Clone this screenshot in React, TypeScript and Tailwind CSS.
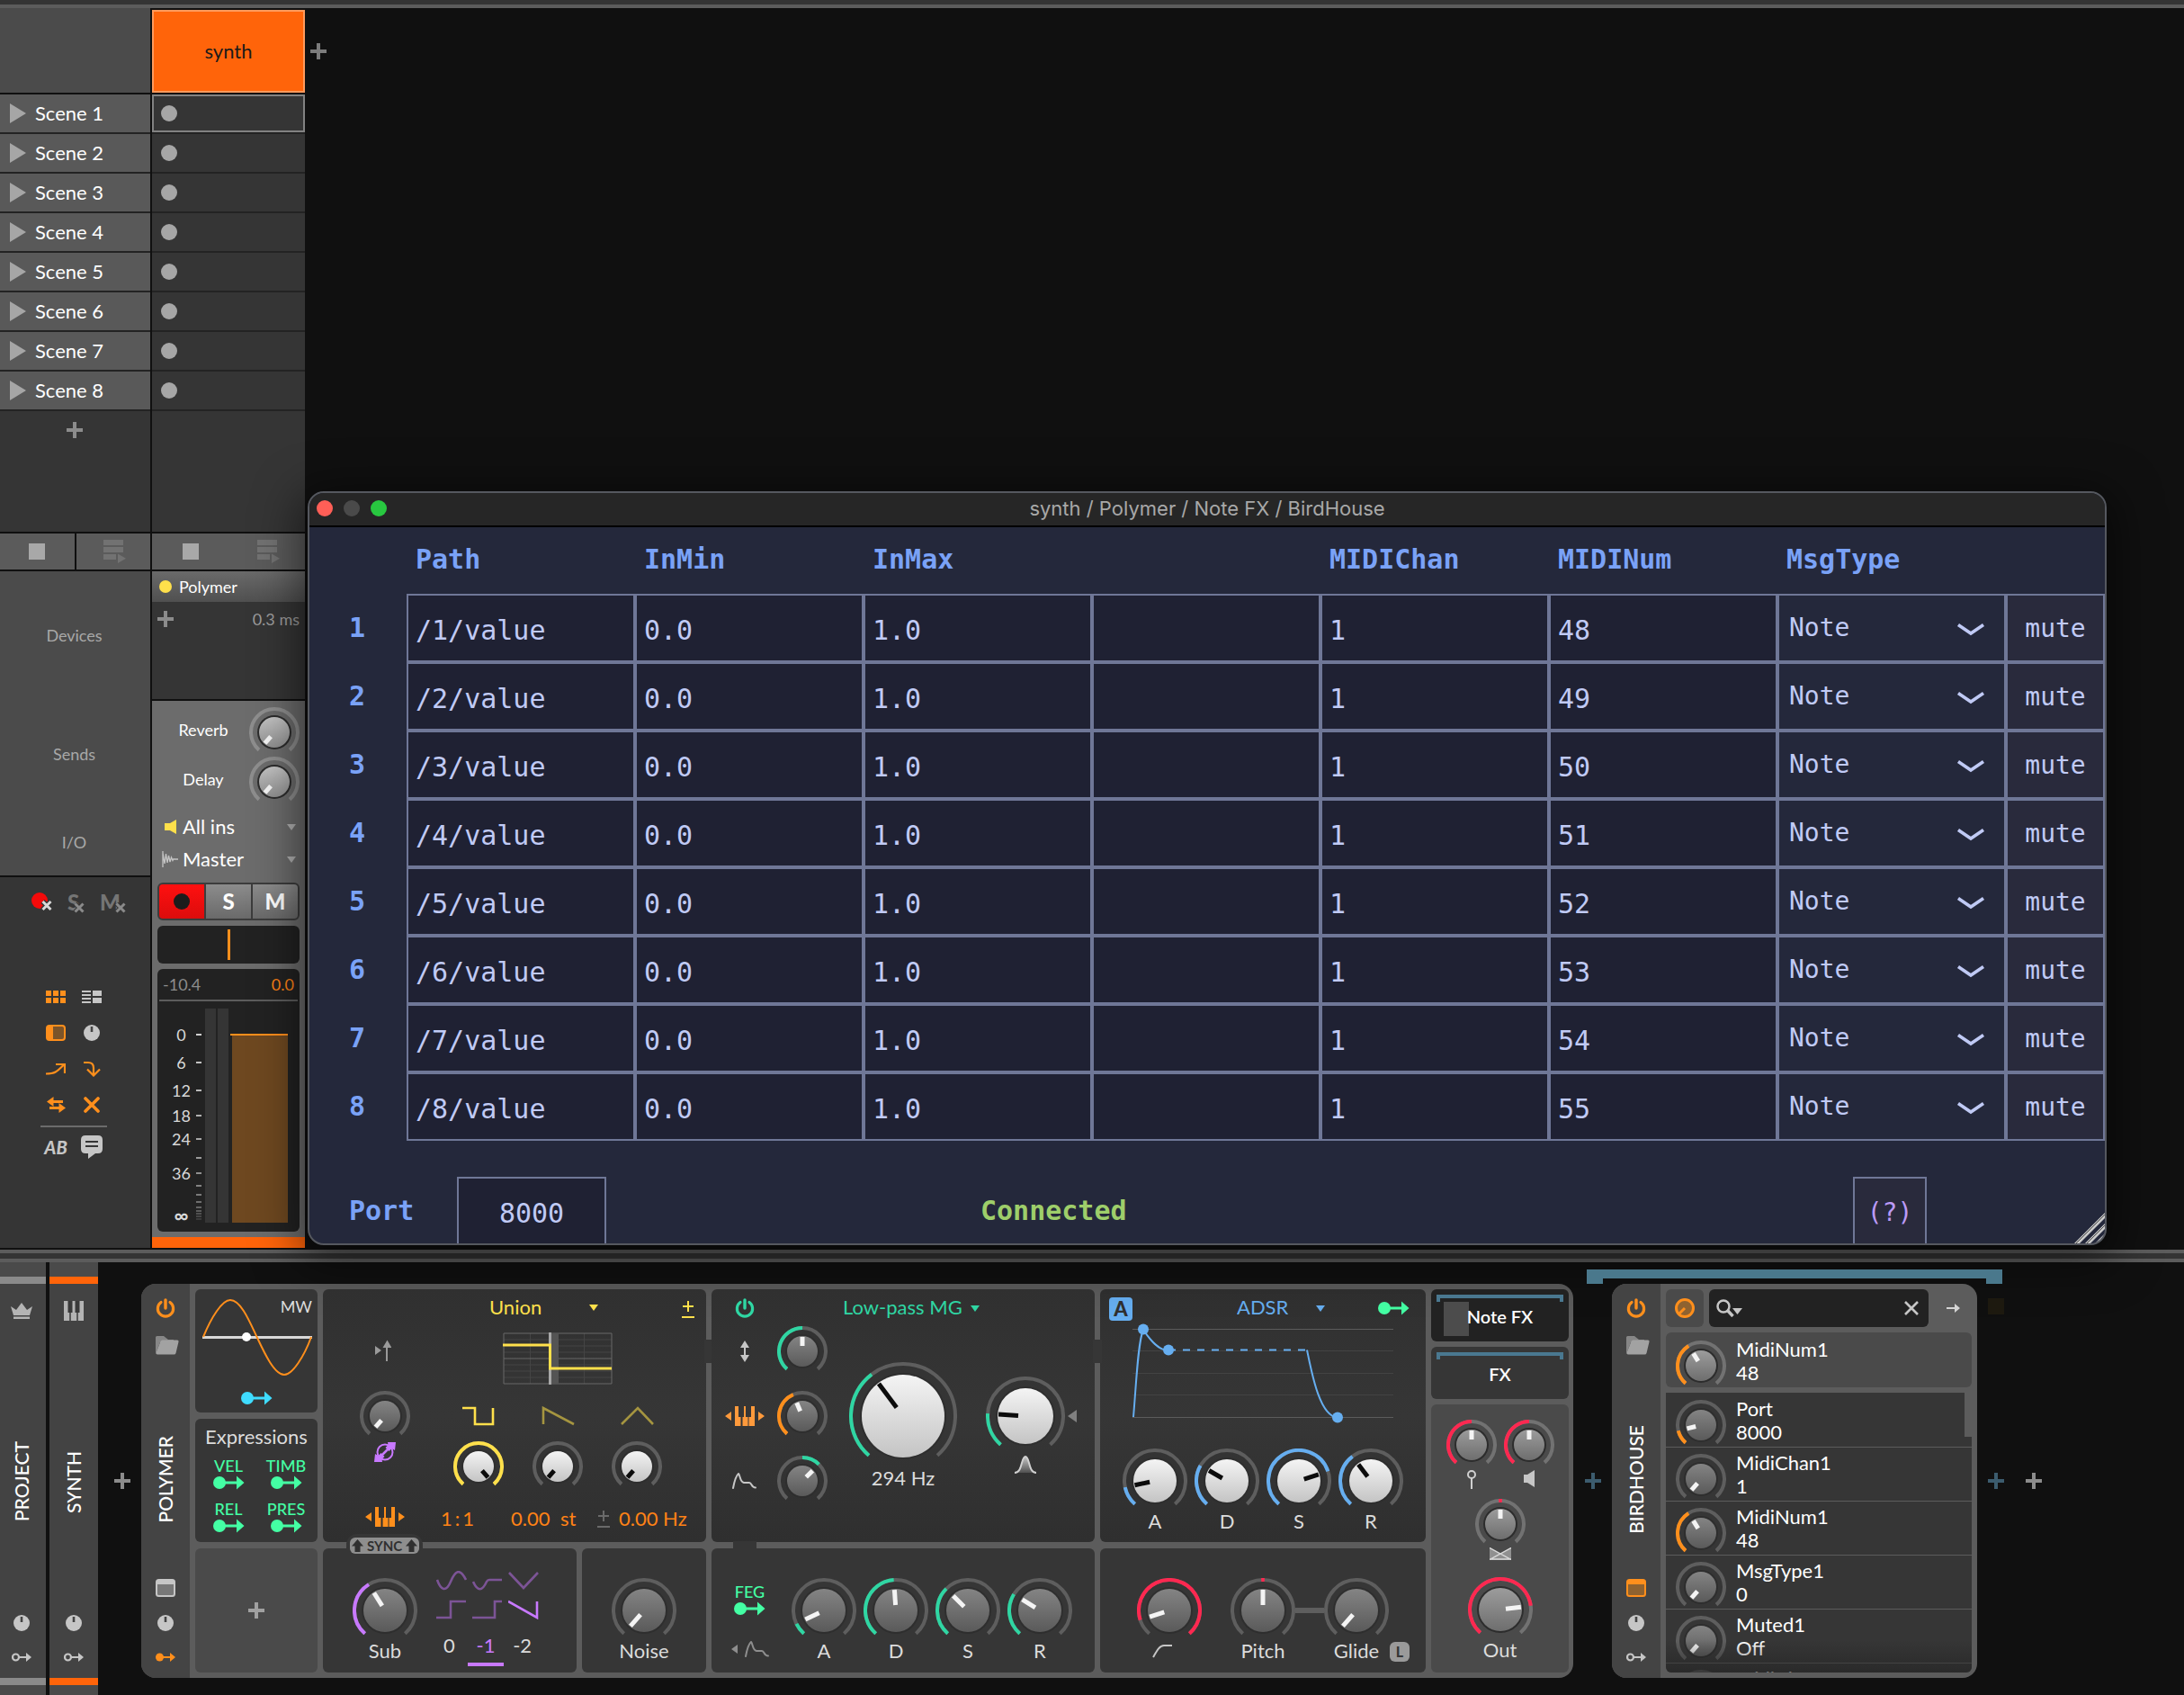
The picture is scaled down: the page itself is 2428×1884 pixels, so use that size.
import React from "react";

/* ---------- knobs ---------- */

const SWEEP = 139;

function polar(c: number, r: number, deg: number) {
  const a = (deg * Math.PI) / 180;
  return [c + r * Math.sin(a), c - r * Math.cos(a)];
}

function arc(c: number, r: number, from: number, to: number) {
  const [x1, y1] = polar(c, r, from);
  const [x2, y2] = polar(c, r, to);
  return `M${x1.toFixed(2)} ${y1.toFixed(2)}A${r} ${r} 0 ${to - from > 180 ? 1 : 0} 1 ${x2.toFixed(2)} ${y2.toFixed(2)}`;
}

type Face = "white" | "dark" | "mid" | "light";

const FACES: Record<Face, { top: string; bottom: string; rim: string; pointer: string }> = {
  white: { top: "#f4f4f4", bottom: "#c4c4c4", rim: "#2e2e2e", pointer: "#0c0c0c" },
  dark: { top: "#848484", bottom: "#5a5a5a", rim: "#2e2e2e", pointer: "#f4f4f4" },
  mid: { top: "#9c9c9c", bottom: "#6e6e6e", rim: "#2c2c2c", pointer: "#f4f4f4" },
  light: { top: "#c4c4c4", bottom: "#909090", rim: "#2c2c2c", pointer: "#f6f6f6" },
};

interface KnobProps {
  label: string;
  size: number;
  angle: number;
  from?: number;
  to?: number;
  color?: string;
  face?: Face;
  ring?: string;
}

function Knob({ label, size, angle, from = -SWEEP, to = angle, color, face = "dark", ring = "#5e5e5e" }: KnobProps) {
  const c = size / 2;
  const r = c - 2;
  const faceR = size <= 56 ? 17 : size <= 72 ? 24 : size <= 88 ? 31 : 46;
  const inner = size <= 72 ? 6 : size <= 88 ? 8 : 12;
  const f = FACES[face];
  const id = `knob-${face}-${size}`;
  return (
    <span className="relative block shrink-0" style={{ width: size, height: size }}>
      <svg width={size} height={size} viewBox={`0 0 ${size} ${size}`} fill="none" aria-hidden="true">
        <defs>
          <linearGradient id={id} x1="0" y1="0" x2="0" y2="1">
            <stop offset="0" stopColor={f.top} />
            <stop offset="1" stopColor={f.bottom} />
          </linearGradient>
        </defs>
        <path d={arc(c, r, -SWEEP, SWEEP)} stroke={ring} strokeWidth="4" />
        {color && to > from && <path d={arc(c, r, from, to)} stroke={color} strokeWidth="4" />}
        <circle cx={c} cy={c} r={faceR + 2} fill={f.rim} />
        <circle cx={c} cy={c} r={faceR} fill={`url(#${id})`} />
        <path d={`M${c} ${c - inner}V${c - faceR + 1}`} stroke={f.pointer} strokeWidth="5" transform={`rotate(${angle} ${c} ${c})`} />
      </svg>
      <input
        type="range"
        aria-label={label}
        min={-SWEEP}
        max={SWEEP}
        defaultValue={angle}
        className="absolute inset-0 h-full w-full cursor-pointer opacity-0"
      />
    </span>
  );
}

/* ---------- icons ---------- */

const Plus = ({ className = "text-[#8c8c8c]" }: { className?: string }) => (
  <svg width="18" height="18" viewBox="0 0 18 18" className={className} aria-hidden="true">
    <path d="M7 0h4v7h7v4h-7v7H7v-7H0V7h7z" fill="currentColor" />
  </svg>
);

const Caret = ({ className = "" }: { className?: string }) => (
  <svg width="10" height="7" viewBox="0 0 10 7" className={className} aria-hidden="true">
    <path d="M0 0h10L5 7z" fill="currentColor" />
  </svg>
);

const ModArrow = ({ className = "text-[#44ffa4]" }: { className?: string }) => (
  <svg width="35" height="16" viewBox="0 0 35 16" className={className} fill="currentColor" aria-hidden="true">
    <circle cx="7" cy="8" r="7" />
    <path d="M12 6.600h14V.5L34.500 8 26 15.500V9.400H12z" />
  </svg>
);

const SmallMod = ({ filled, className = "" }: { filled?: boolean; className?: string }) => (
  <svg width="22" height="10" viewBox="0 0 22 10" className={className} fill="none" aria-hidden="true">
    <circle cx="4.500" cy="5" r={filled ? 4.5 : 3.5} stroke={filled ? "none" : "currentColor"} strokeWidth="2.200" fill={filled ? "currentColor" : "none"} />
    <path d="M8 5h9" stroke="currentColor" strokeWidth="2" />
    <path d="M16 0l6 5-6 5z" fill="currentColor" />
  </svg>
);

const Dial = () => (
  <svg width="18" height="18" viewBox="0 0 18 18" aria-hidden="true">
    <circle cx="9" cy="9" r="9" fill="#c6c6c6" />
    <path d="M9 2v6" stroke="#444" strokeWidth="2.600" />
  </svg>
);

const Power = ({ className }: { className: string }) => (
  <svg width="22" height="22" viewBox="0 0 22 22" className={className} fill="none" stroke="currentColor" strokeLinecap="round" aria-hidden="true">
    <path d="M6 4.500a8.600 8.600 0 1 0 10 0" strokeWidth="3.200" />
    <path d="M11 2v9" strokeWidth="3.400" />
  </svg>
);

const Folder = () => (
  <svg width="26" height="21" viewBox="0 0 26 21" aria-hidden="true">
    <path d="M0 1.500Q0 0 1.500 0H9l5 4h6v3H5L0 20z" fill="#868686" />
    <path d="M5.500 6Q6 4.500 7.500 4.500H24q2 0 1.500 2l-3 12.500q-.5 1.500-2 1.500H2q-2 0-1.500-2z" fill="#a2a2a2" />
  </svg>
);

const WindowIcon = ({ on }: { on?: boolean }) => (
  <svg width="22" height="20" viewBox="0 0 22 20" aria-hidden="true">
    <rect width="22" height="20" rx="3.500" fill={on ? "#ff8f1c" : "#c6c6c6"} />
    <path d="M2 6h18v10.500q0 1.500-1.500 1.500h-15Q2 18 2 16.500z" fill={on ? "#8f6230" : "#787878"} />
  </svg>
);

const Keyboard = ({ className }: { className: string }) => (
  <svg width="44" height="22" viewBox="0 0 44 22" className={className} fill="currentColor" aria-hidden="true">
    <path d="M7 6v10L0 11zM37 6v10l7-5zM11 0h4v12h2.500v10H11zM21 0h2v12h2.500v10h-6V12H21zM29 0h4v22h-6.500V12H29z" />
  </svg>
);

const Envelope = ({ className }: { className: string }) => (
  <svg width="27" height="18" viewBox="0 0 27 18" className={className} fill="none" stroke="currentColor" strokeWidth="2" strokeLinejoin="round" strokeLinecap="round" aria-hidden="true">
    <path d="M1 17C2.500 9 4.500 3 7 1c2 2 1.500 9 6 10h6c3 0 2 5.500 7 5.500" />
  </svg>
);

const PlusMinus = ({ className }: { className: string }) => (
  <svg width="14" height="19" viewBox="0 0 14 19" className={className} fill="none" stroke="currentColor" strokeWidth="2" aria-hidden="true">
    <path d="M7 0v12M1 6h12M0 18h14" />
  </svg>
);

const ListPlay = () => (
  <svg width="25" height="26" viewBox="0 0 25 26" fill="#727272" aria-hidden="true">
    <path d="M0 0h22v6H0zM0 8h22v6H0zM0 16h14v6H0zM16 15.500l9 5.250-9 5.250z" />
  </svg>
);

/* ---------- scene and track columns ---------- */

const scenes = [1, 2, 3, 4, 5, 6, 7, 8];

function SceneColumn() {
  return (
    <aside className="flex w-[167px] shrink-0 flex-col gap-[2px]">
      <div className="h-[94px] bg-[#4b4b4b]" />
      <div className="bg-[#353535]">
        {scenes.map((n) => (
          <button key={n} type="button" className="flex h-11 w-full items-center border-b-2 border-[#232323] bg-[#595959] pl-[11px] text-[22px] leading-[26px] text-white">
            <svg width="18" height="22" viewBox="0 0 18 22" className="mr-[10px]" aria-hidden="true">
              <path d="M0 0l18 11L0 22z" fill="#a6a6a6" />
            </svg>
            Scene {n}
          </button>
        ))}
        <div className="flex h-[134px] justify-center pt-3 pr-[2px]">
          <button type="button" aria-label="Add scene" className="h-[18px]">
            <Plus />
          </button>
        </div>
      </div>
      <div className="grid h-10 grid-cols-2 gap-[2px]">
        <button type="button" aria-label="Stop all clips" className="flex items-center justify-center bg-[#5b5b5b]">
          <span className="size-[18px] bg-[#a8a8a8]" />
        </button>
        <button type="button" aria-label="Return to arrangement" className="flex items-center justify-center bg-[#5b5b5b] pl-[3px]">
          <ListPlay />
        </button>
      </div>
      <div className="bg-[#4b4b4b] pr-[2px] text-center text-[18px] leading-[22px] text-[#a8a8a8]">
        <div className="flex h-[142px] items-center justify-center">Devices</div>
        <div className="flex h-[121px] items-center justify-center">Sends</div>
        <div className="flex h-[75px] items-center justify-center">I/O</div>
      </div>
      <div className="flex flex-1 flex-col items-center bg-[#353535] pt-4 pr-[3px]">
        <div className="flex w-full items-start pl-[35px]">
          <button type="button" aria-label="Disarm all">
            <svg width="24" height="24" viewBox="0 0 24 24" aria-hidden="true">
              <circle cx="9" cy="10" r="9" fill="#f40a0a" />
              <path d="M12.500 11l9 9M21.500 11l-9 9" stroke="#353535" strokeWidth="6" />
              <path d="M12.500 11l9 9M21.500 11l-9 9" stroke="#d8d8d8" strokeWidth="3" />
            </svg>
          </button>
          {[
            { t: "S", label: "Unsolo all", cls: "ml-4 -mr-1" },
            { t: "M", label: "Unmute all", cls: "ml-4" },
          ].map(({ t, label, cls }) => (
            <button key={t} type="button" aria-label={label} className={`flex w-6 items-end text-[24px] leading-6 font-black text-[#757575] ${cls}`}>
              {t}
              <svg width="12" height="12" viewBox="0 0 12 12" className="-ml-[6px] shrink-0" aria-hidden="true">
                <path d="M1.500 1.500l9 9M10.500 1.500l-9 9" stroke="#353535" strokeWidth="5" />
                <path d="M1.500 1.500l9 9M10.500 1.500l-9 9" stroke="#8a8a8a" strokeWidth="3" />
              </svg>
            </button>
          ))}
        </div>
        <div className="mt-[73px] grid grid-cols-[40px_40px] grid-rows-[40px_40px_40px_40px] place-items-center text-[#ff8f1c]">
          <button type="button" aria-label="Clip launcher">
            <svg width="22" height="14" viewBox="0 0 22 14" fill="currentColor" aria-hidden="true">
              <path d="M0 0h6v6H0zM8 0h6v6H8zM16 0h6v6h-6zM0 8h6v6H0zM8 8h6v6H8zM16 8h6v6h-6z" />
            </svg>
          </button>
          <button type="button" aria-label="Devices">
            <svg width="22" height="14" viewBox="0 0 22 14" fill="#c6c6c6" aria-hidden="true">
              <path d="M0 0h10v2H0zM0 4h10v2H0zM0 8h10v2H0zM0 12h10v2H0zM12 0h10v6H12zM12 8h10v6H12z" />
            </svg>
          </button>
          <button type="button" aria-label="Crossfader">
            <svg width="22" height="18" viewBox="0 0 22 18" aria-hidden="true">
              <rect width="22" height="18" rx="4" fill="currentColor" />
              <path d="M8 2h10q2 0 2 2v10q0 2-2 2H8z" fill="#7c5429" />
            </svg>
          </button>
          <button type="button" aria-label="Sends">
            <Dial />
          </button>
          <button type="button" aria-label="Outputs">
            <svg width="22" height="14" viewBox="0 0 22 14" fill="none" stroke="currentColor" strokeWidth="2.200" aria-hidden="true">
              <path d="M0 12.500c10 0 12-2 20-10M11 2h10v10" />
            </svg>
          </button>
          <button type="button" aria-label="Inputs">
            <svg width="19" height="18" viewBox="0 0 19 18" fill="none" stroke="currentColor" strokeWidth="2.200" aria-hidden="true">
              <path d="M0 2h5q6 0 6 6v8M4 9.500l7 7 7-7" />
            </svg>
          </button>
          <button type="button" aria-label="Crossfade routing">
            <svg width="21" height="18" viewBox="0 0 21 18" fill="currentColor" aria-hidden="true">
              <path d="M0 5.500L7.500 0v4H18v3H7.500v4zM21 12.500L13.500 7v4H3v3h10.500v4z" />
            </svg>
          </button>
          <button type="button" aria-label="Close lanes">
            <svg width="18" height="18" viewBox="0 0 18 18" stroke="currentColor" strokeWidth="3.600" strokeLinecap="round" aria-hidden="true">
              <path d="M2 2l14 14M16 2L2 16" />
            </svg>
          </button>
        </div>
        <div className="mt-[3px] h-[2px] w-[74px] bg-[#6b6b6b]" />
        <div className="mt-[9px] grid grid-cols-[40px_40px] place-items-center text-[#c6c6c6]">
          <button type="button" className="text-[20px] leading-[26px] font-black italic">
            AB
          </button>
          <button type="button" aria-label="Comments">
            <svg width="24" height="26" viewBox="0 0 24 26" aria-hidden="true">
              <path d="M5 0h14q5 0 5 5v10q0 5-5 5h-3l-8 6v-6H5q-5 0-5-5V5q0-5 5-5z" fill="#c6c6c6" />
              <path d="M5 7h14M5 12h14" stroke="#353535" strokeWidth="2" />
            </svg>
          </button>
        </div>
      </div>
    </aside>
  );
}

const meterMarks = [
  { label: "0", cls: "" },
  { label: "6", cls: "mt-[11px]" },
  { label: "12", cls: "mt-[11px]" },
  { label: "18", cls: "mt-2" },
  { label: "24", cls: "mt-[6px]" },
  { label: "36", cls: "mt-[18px]" },
  { label: "∞", cls: "mt-[27px] text-[22px] font-bold" },
];

const ticks = [
  [28, "#d0d0d0"],
  [59, "#c4c4c4"],
  [90, "#bababa"],
  [118, "#b0b0b0"],
  [144, "#a6a6a6"],
  [165, "#9a9a9a"],
  [182, "#909090"],
  [196, "#848484"],
  [206, "#7a7a7a"],
  [214, "#6e6e6e"],
  [220, "#646464"],
  [224, "#5a5a5a"],
  [227, "#505050"],
  [230, "#464646"],
  [233, "#3a3a3a"],
] as const;

function Routing({ id, label, value, icon }: { id: string; label: string; value: string; icon: React.ReactNode }) {
  return (
    <div className="relative flex h-9 items-center text-[22px] leading-[26px] text-white">
      <span className="flex w-7 shrink-0 justify-center">{icon}</span>
      <select id={id} aria-label={label} className="min-w-0 flex-1 appearance-none bg-transparent outline-none">
        <option>{value}</option>
      </select>
      <Caret className="pointer-events-none absolute right-1 text-[#b0b0b0]" />
    </div>
  );
}

function TrackColumn() {
  return (
    <section className="ml-[2px] flex w-[170px] shrink-0 flex-col gap-[2px] pt-[2px]">
      <button type="button" className="h-[92px] border-2 border-[#ff9a5c] bg-[#ff640a] text-[22px] leading-[26px] text-[#1a1a1a]">
        synth
      </button>
      <div className="bg-[#353535]">
        {scenes.map((n) => (
          <div key={n} className="h-11 border-b-2 border-[#232323]">
            <button
              type="button"
              aria-label={`Record into scene ${n}`}
              className={`flex h-full w-full items-center ${n === 1 ? "border-2 border-[#828282] pl-2" : "pl-[10px]"}`}
            >
              <span className="size-[18px] rounded-full bg-[#a6a6a6]" />
            </button>
          </div>
        ))}
        <div className="h-[134px]" />
      </div>
      <div className="flex h-10 items-center justify-between bg-[#5b5b5b] pr-7 pl-[34px]">
        <button type="button" aria-label="Stop track">
          <span className="block size-[18px] bg-[#a8a8a8]" />
        </button>
        <button type="button" aria-label="Return track to arrangement">
          <ListPlay />
        </button>
      </div>
      <div className="bg-[#353535]">
        <div className="flex h-[34px] items-center bg-linear-to-b from-[#6a6a6a] to-[#505050] pl-2 text-[18px] leading-[22px] text-white">
          <span className="mr-2 size-[14px] rounded-full bg-[#ffe04b]" />
          Polymer
        </div>
        <div className="flex h-[108px] items-start justify-between pt-2 pr-[6px] pl-[6px]">
          <button type="button" aria-label="Add device" className="mt-[2px]">
            <Plus />
          </button>
          <span className="text-[18px] leading-[22px] text-[#9c9c9c]">0.3 ms</span>
        </div>
      </div>
      <div className="bg-[#6c6c6c]">
        <div className="px-[6px] pt-[7px] pb-[6px]">
          {["Reverb", "Delay"].map((name) => (
            <div key={name} className="flex h-[55px] items-center text-[18px] leading-[22px] text-white">
              <span className="flex-1 pb-[6px] text-center">{name}</span>
              <Knob label={name} size={56} angle={-SWEEP} face="light" ring="#8e8e8e" />
            </div>
          ))}
          <div className="mt-[5px]">
            <Routing
              id="track-in"
              label="Track input"
              value="All ins"
              icon={
                <svg width="13" height="16" viewBox="0 0 13 16" fill="#ffe04b" aria-hidden="true">
                  <path d="M0 4h6l7-4v16l-7-4H0z" />
                </svg>
              }
            />
            <Routing
              id="track-out"
              label="Track output"
              value="Master"
              icon={
                <svg width="18" height="18" viewBox="0 0 18 18" stroke="#c4c4c4" strokeWidth="1.300" fill="none" aria-hidden="true">
                  <path d="M1 0v18M1 2l2 12 1.500-11L6 13l1.500-8L9 12l1.500-5L12 10.500l1-2 1 .5h4" />
                </svg>
              }
            />
          </div>
          <div className="mt-2 grid h-[42px] grid-cols-3 gap-[2px] overflow-hidden rounded-md border-2 border-[#3c3c3c] bg-[#3c3c3c] text-[24px] leading-[26px] font-black text-white">
            <button type="button" aria-label="Record arm" className="flex items-center justify-center bg-linear-to-b from-[#ff1010] to-[#dc0c0c]">
              <span className="size-[18px] rounded-full bg-[#1c1c1c]" />
            </button>
            <button type="button" className="bg-linear-to-b from-[#8c8c8c] to-[#6a6a6a]">
              S
            </button>
            <button type="button" className="bg-linear-to-b from-[#8c8c8c] to-[#6a6a6a]">
              M
            </button>
          </div>
          <div className="relative mt-[6px] flex h-[42px] justify-center rounded-md bg-[#222] py-1">
            <span className="w-[3px] bg-[#ff8f1c]" />
            <input type="range" aria-label="Pan" className="absolute inset-0 h-full w-full opacity-0" />
          </div>
          <div className="mt-[6px] h-[292px] rounded-md bg-[#222] px-[2px]">
            <div className="flex h-9 items-center justify-between border-b-2 border-[#5c5c5c] px-1 text-[18px] leading-[22px]">
              <span className="text-[#8c8c8c]">-10.4</span>
              <span className="text-[#ff8216]">0.0</span>
            </div>
            <div className="relative flex pt-2">
              <div className="flex w-[41px] flex-col items-center pt-[19px] pl-2 text-[18px] leading-5 text-[#d8d8d8]">
                {meterMarks.map((m) => (
                  <span key={m.label} className={m.cls}>
                    {m.label}
                  </span>
                ))}
              </div>
              <svg width="102" height="238" viewBox="0 0 102 238" aria-hidden="true">
                {ticks.map(([y, c]) => (
                  <rect key={y} x="0" y={y} width="6" height="2" fill={c} />
                ))}
                <path d="M10 0h12v238H10zM24 0h12v238H24z" fill="#353535" />
                <path d="M40 29h62v209H40z" fill="#6e4820" />
                <path d="M38 28h64v2H38z" fill="#ff8f1c" />
              </svg>
              <input type="range" aria-label="Volume" className="absolute inset-0 h-full w-full opacity-0" />
            </div>
          </div>
        </div>
        <div className="h-3 bg-[#ff640a]" />
      </div>
    </section>
  );
}

/* ---------- floating plug-in window ---------- */

const columns = ["Path", "InMin", "InMax", "", "MIDIChan", "MIDINum", "MsgType"];
const fields = ["Path", "InMin", "InMax", "Extra", "MIDIChan", "MIDINum"];

function PluginWindow() {
  return (
    <section className="absolute top-[537px] right-[86px] left-[342px] overflow-hidden rounded-[18px] border-2 border-[#55585f] bg-[#24283b] font-['DejaVu_Sans_Mono',monospace] shadow-[0_10px_50px_10px_rgba(0,0,0,0.5)]">
      <header className="relative flex h-[38px] items-center justify-center border-b-2 border-black bg-[#262626] pb-[2px] font-[Inter,sans-serif] text-[22px] leading-[26px] text-[#a8a8a8]">
        <div className="absolute left-2 flex gap-3">
          <button type="button" aria-label="Close" className="size-[18px] rounded-full bg-[#ff5f57]" />
          <button type="button" aria-label="Minimize" className="size-[18px] rounded-full bg-[#4a4a4a]" />
          <button type="button" aria-label="Zoom" className="size-[18px] rounded-full bg-[#28c840]" />
        </div>
        <h1>synth / Polymer / Note FX / BirdHouse</h1>
      </header>
      <table className="w-full table-fixed border-collapse text-[30px] leading-9 text-[#c0caf5]">
        <colgroup>
          <col className="w-[108px]" />
          {columns.map((c, i) => (
            <col key={i} />
          ))}
          <col className="w-[110px]" />
        </colgroup>
        <thead>
          <tr className="h-[74px] text-left align-top text-[#7aa2f7]">
            <td />
            {columns.map((c, i) => (
              <th key={i} scope="col" className="pt-[18px] pl-[10px] font-bold">
                {c}
              </th>
            ))}
            <td />
          </tr>
        </thead>
        <tbody>
          {scenes.map((n) => {
            const values = [`/${n}/value`, "0.0", "1.0", "", "1", String(47 + n)];
            return (
              <tr key={n} className="h-[76px]">
                <th scope="row" className="p-0 pr-[2px] font-bold text-[#7aa2f7]">
                  {n}
                </th>
                {values.map((v, i) => (
                  <td key={i} className="p-0">
                    <input
                      type="text"
                      aria-label={`${fields[i]} ${n}`}
                      defaultValue={v}
                      className="block h-[76px] w-full border-2 border-[#6f7797] bg-[#1f2133] pt-[5px] pl-2 outline-none"
                    />
                  </td>
                ))}
                <td className="p-0">
                  <div className="relative">
                    <select aria-label={`MsgType ${n}`} className="block h-[76px] w-full appearance-none border-2 border-[#6f7797] bg-[#24283b] pl-[11px] text-[28px] outline-none">
                      <option>Note</option>
                    </select>
                    <svg width="32" height="16" viewBox="0 0 32 16" className="pointer-events-none absolute top-8 right-[23px]" fill="none" aria-hidden="true">
                      <path d="M2 2.500l14 9.500L30 2.500" stroke="#c0caf5" strokeWidth="3.600" />
                    </svg>
                  </div>
                </td>
                <td className="p-0">
                  <button type="button" className="block h-[76px] w-full border-2 border-[#6f7797] bg-[#292a3c] pt-[2px] text-[28px]">
                    mute
                  </button>
                </td>
              </tr>
            );
          })}
        </tbody>
      </table>
      <footer className="relative flex h-[114px] items-start pt-10 text-[30px] leading-9">
        <label htmlFor="port" className="w-[164px] pt-5 pl-[44px] font-bold text-[#7aa2f7]">
          Port
        </label>
        <input id="port" type="text" defaultValue="8000" className="h-[76px] w-[166px] border-2 border-[#6f7797] bg-[#1f2133] pt-[5px] text-center text-[#c0caf5] outline-none" />
        <strong className="ml-[416px] pt-5 text-[#9ece6a]">Connected</strong>
        <button type="button" className="mr-[198px] ml-auto h-[76px] w-[82px] border-2 border-[#6f7797] bg-[#292a3c] pt-[3px] text-[28px] text-[#bb9af7]">
          (?)
        </button>
        <svg width="36" height="36" viewBox="0 0 36 36" className="absolute right-0 bottom-0" aria-hidden="true">
          <path d="M2 36L36 2v6L8 36zM14 36l22-22v6L20 36zM25 36l11-11v6l-5 5z" fill="#c9c9c9" />
          <path d="M4 36L36 4M16 36l20-20M27 36l9-9" stroke="#4a4a4a" strokeWidth="1" />
        </svg>
      </footer>
    </section>
  );
}

/* ---------- device rack ---------- */

function RackStrip({ name, width, inset, active, icon }: { name: string; width: string; inset?: string; active?: boolean; icon: React.ReactNode }) {
  const bar = active ? "bg-[#ff640a]" : "bg-[#8a8a8a]";
  return (
    <div className={`flex flex-col bg-[#4a4a4a] pt-4 ${width}`}>
      <div className={`h-2 ${bar}`} />
      <div className={`flex h-[438px] flex-col items-center bg-[#434343] pt-4 ${inset ?? ""}`}>
        <div className="flex h-7 items-center">{icon}</div>
        <VerticalName>{name}</VerticalName>
        <Dial />
        <SmallMod className="mt-6 mb-[18px] text-[#c6c6c6]" />
      </div>
      <div className={`h-2 ${bar}`} />
    </div>
  );
}

function VerticalName({ children }: { children: string }) {
  return (
    <div className="flex flex-1 items-center justify-center pt-7">
      <span className="rotate-180 text-[21px] leading-[26px] font-medium text-white [writing-mode:vertical-rl]">{children}</span>
    </div>
  );
}

function DeviceSpine({ name, windowOn, modOn }: { name: string; windowOn?: boolean; modOn?: boolean }) {
  return (
    <div className="flex w-[54px] shrink-0 flex-col items-center bg-[#444] pt-4">
      <button type="button" aria-label={`${name} on`}>
        <Power className="text-[#ff8f1c]" />
      </button>
      <button type="button" aria-label={`Browse ${name}`} className="mt-5 ml-1">
        <Folder />
      </button>
      <VerticalName>{name}</VerticalName>
      <div className="flex flex-col items-center">
        <button type="button" aria-label={`${name} window`}>
          <WindowIcon on={windowOn} />
        </button>
        <button type="button" aria-label={`${name} remote controls`} className="mt-5">
          <Dial />
        </button>
        <button type="button" aria-label={`${name} modulators`} className="mt-6 mb-[18px]">
          <SmallMod filled={modOn} className={modOn ? "text-[#ff8f1c]" : "text-[#c6c6c6]"} />
        </button>
      </div>
    </div>
  );
}

const panel = "rounded-md bg-[#363636]";
const tall = "rounded-md bg-linear-to-b from-[#303030] via-[#363636] to-[#2f2f2f]";

function KnobField({ text, children }: { text: React.ReactNode; children: React.ReactNode }) {
  return (
    <div className="flex flex-col items-center">
      {children}
      <span className="-mt-1 flex h-[26px] items-center text-[22px] leading-[26px] text-[#dcdcdc]">{text}</span>
    </div>
  );
}

function ModLabel({ text }: { text: string }) {
  return (
    <button type="button" className="flex flex-col items-center text-[18px] leading-[22px] font-medium text-[#44ffa4]">
      {text}
      <ModArrow />
    </button>
  );
}

function ModulatorColumn() {
  return (
    <>
      <div className={`relative ${panel}`}>
        <svg width="122" height="86" viewBox="0 0 122 86" fill="none" className="mt-[11px] ml-2" aria-hidden="true">
          <path d="M0 42.500h122" stroke="#d8d8d8" strokeWidth="3" />
          <path d="M1 42C10 20 22 1 31 1c12 0 22 25 30 42s19 41 30 41c9 0 22-20 30-42" stroke="#ff8f1c" strokeWidth="2" />
          <circle cx="49" cy="42" r="5" fill="#fff" />
        </svg>
        <span className="absolute top-2 right-[6px] text-[18px] leading-[22px] text-[#dcdcdc]">MW</span>
        <div className="mt-4 flex justify-center">
          <ModArrow className="text-[#3fdcff]" />
        </div>
      </div>
      <div className={`${panel} pt-[7px]`}>
        <div className="text-center text-[22px] leading-[26px] text-[#dcdcdc]">Expressions</div>
        <div className="mt-2 grid grid-cols-2 gap-y-[10px] pr-[3px] pl-[5px]">
          {["VEL", "TIMB", "REL", "PRES"].map((t) => (
            <ModLabel key={t} text={t} />
          ))}
        </div>
      </div>
      <button type="button" aria-label="Add modulator" className="flex items-center justify-center rounded-md bg-[#4a4a4a]">
        <Plus className="text-[#a0a0a0]" />
      </button>
    </>
  );
}

function PanelSelect({ label, value, className }: { label: string; value: string; className: string }) {
  return (
    <select aria-label={label} className={`appearance-none bg-transparent text-[22px] leading-[26px] outline-none ${className}`}>
      <option>{value}</option>
    </select>
  );
}

function OscillatorPanel() {
  const shapes = [
    { name: "Pulse level", d: "M0 2h14v18h20V2", on: true },
    { name: "Saw level", d: "M2 20V2l34 18", on: false },
    { name: "Triangle level", d: "M1 20L19 2l17 18", on: false },
  ];
  return (
    <div className={`relative flex ${tall}`}>
      <div className="flex w-[129px] flex-col items-center pt-14 pl-2">
        <svg width="18" height="24" viewBox="0 0 18 24" fill="#9a9a9a" className="-ml-1" aria-hidden="true">
          <path d="M0 7l7 5-7 5zM12 24V9H8.500l5-8.500 5 8.500H14v15z" />
        </svg>
        <div className="mt-[33px]">
          <Knob label="Pulse width" size={56} angle={-SWEEP} />
        </div>
        <svg width="26" height="24" viewBox="0 0 26 24" className="text-[#c879ff]" fill="none" stroke="currentColor" aria-hidden="true">
          <circle cx="13" cy="12" r="8.500" strokeWidth="2" />
          <path d="M6 19L20 5" strokeWidth="2.500" />
          <path d="M16 1l9 0-1 9-3.500-2-3 3-4-4 3-3zM10 23l-9 0 1-9 3.500 2 3-3 4 4-3 3z" fill="currentColor" stroke="none" />
        </svg>
        <Keyboard className="mt-[49px] text-[#ff8f1c]" />
      </div>
      <div className="flex-1">
        <div className="flex h-10 items-center pr-[13px] pl-14 text-[#ffe04b]">
          <PanelSelect label="Oscillator" value="Union" className="w-[111px]" />
          <Caret />
          <button type="button" aria-label="Invert" className="mt-1 ml-auto">
            <PlusMinus className="" />
          </button>
        </div>
        <div className="w-[264px]">
          <svg width="122" height="58" viewBox="0 0 122 58" className="mx-auto mt-2" fill="none" aria-hidden="true">
            <path d="M1 8h120M1 15h120M1 22h120M1 36h120M1 43h120M1 50h120M30.500 1v56M90.500 1v56" stroke="#444" />
            <path d="M1 1h120v56H1zM1 29h120" stroke="#686868" />
            <path d="M54 1h8v56h-8z" fill="#545454" />
            <path d="M52.500 0v58" stroke="#a8a8a8" strokeWidth="3" />
            <path d="M0 14h52.500v26H121" stroke="#ffe04b" strokeWidth="3" />
          </svg>
          <div className="mt-6 grid grid-cols-3">
            {shapes.map((s) => (
              <div key={s.name} className="flex flex-col items-center">
                <svg width="37" height="22" viewBox="0 0 37 22" fill="none" stroke={s.on ? "#ffe04b" : "#a59540"} strokeWidth="2.600" aria-hidden="true">
                  <path d={s.d} />
                </svg>
                <div className="mt-[17px]">
                  <Knob label={s.name} size={56} angle={s.on ? SWEEP : -SWEEP} color="#ffe04b" face="white" />
                </div>
              </div>
            ))}
          </div>
        </div>
        <div className="mt-[17px] flex items-center pl-[2px] text-[22px] leading-[26px] text-[#ff8216]">
          <span className="flex w-[78px] gap-[3px]">
            <span>1</span>
            <span>:</span>
            <span>1</span>
          </span>
          <span className="w-[55px]">0.00</span>
          <span className="w-[41px]">st</span>
          <PlusMinus className="mr-[10px] text-[#6a6a6a]" />
          <span>0.00 Hz</span>
        </div>
      </div>
      <div className="absolute -bottom-[13px] left-[26px] z-10 rounded-t-xl bg-[#363636] px-1 pt-1">
        <button type="button" className="flex h-[18px] items-center gap-1 rounded-md bg-[#8e8e8e] px-[2px] text-[15px] leading-[18px] font-bold text-[#303030]">
          <svg width="13" height="14" viewBox="0 0 13 14" fill="currentColor" aria-hidden="true">
            <path d="M6.500 0L13 7.500H9.500V14h-6V7.500H0z" />
          </svg>
          SYNC
          <svg width="13" height="14" viewBox="0 0 13 14" fill="currentColor" aria-hidden="true">
            <path d="M6.500 0L13 7.500H9.500V14h-6V7.500H0z" />
          </svg>
        </button>
      </div>
      <span className="absolute top-14 -right-[8px] h-[26px] w-[10px] bg-[#363636]" />
    </div>
  );
}

function FilterPanel() {
  return (
    <div className={`relative ${tall}`}>
      <div className="flex h-[33px] items-start pt-[7px] text-[#2fd6a3]">
        <button type="button" aria-label="Filter on" className="mt-[3px] ml-[26px]">
          <Power className="" />
        </button>
        <PanelSelect label="Filter" value="Low-pass MG" className="ml-[98px] w-[142px]" />
        <Caret className="mt-[11px]" />
      </div>
      <div className="flex">
        <div className="grid grid-cols-[73px_56px] grid-rows-[72px_72px_72px] place-items-center">
          <svg width="10" height="24" viewBox="0 0 10 24" fill="#c6c6c6" aria-hidden="true">
            <path d="M5 0l5 8H6v8h4l-5 8-5-8h4V8H0z" />
          </svg>
          <Knob label="Filter drive" size={56} angle={0} color="#2fd6a3" />
          <Keyboard className="text-[#ff9a3c]" />
          <Knob label="Key tracking" size={56} angle={-23} color="#ff8f1c" />
          <Envelope className="text-[#c6c6c6]" />
          <Knob label="Envelope amount" size={56} angle={45} from={0} color="#2fd6a3" />
        </div>
        <div className="mt-12 ml-6">
          <KnobField text="294 Hz">
            <Knob label="Cutoff" size={120} angle={-37} color="#2fd6a3" face="white" />
          </KnobField>
        </div>
        <div className="mt-16 ml-8 flex flex-col items-center">
          <Knob label="Resonance" size={88} angle={-86} color="#2fd6a3" face="white" />
          <svg width="24" height="20" viewBox="0 0 24 20" aria-hidden="true">
            <defs>
              <linearGradient id="bell" x1="0" y1="0" x2="0" y2="1">
                <stop offset="0" stopColor="#c8c8c8" />
                <stop offset="1" stopColor="#505050" />
              </linearGradient>
            </defs>
            <path d="M0 19c9 0 7-18 12-18s3 18 12 18z" fill="url(#bell)" />
            <path d="M0 19c9 0 7-18 12-18s3 18 12 18" fill="none" stroke="#d0d0d0" strokeWidth="2" />
          </svg>
        </div>
        <svg width="10" height="14" viewBox="0 0 10 14" className="mt-[101px] ml-[3px]" aria-hidden="true">
          <path d="M10 0v14L0 7z" fill="#808080" />
        </svg>
      </div>
      <span className="absolute top-14 -right-[8px] z-10 h-[26px] w-[10px] bg-[#363636]" />
      <span className="absolute -bottom-2 left-6 h-[9px] w-[26px] bg-[#363636]" />
    </div>
  );
}

function AdsrPanel() {
  const knobs = [
    ["A", -102],
    ["D", -60],
    ["S", 72],
    ["R", -37],
  ] as const;
  return (
    <div className={tall}>
      <div className="flex h-[38px] items-start pt-[7px] pl-[10px] text-[#66aef0]">
        <button type="button" aria-label="Amp envelope" className="mt-[2px] h-[26px] w-[26px] rounded bg-[#66aef0] text-[22px] leading-[26px] font-black text-[#303030]">
          A
        </button>
        <PanelSelect label="Envelope" value="ADSR" className="ml-[116px] w-[88px]" />
        <Caret className="mt-[11px]" />
        <button type="button" aria-label="Envelope modulation" className="mt-[6px] ml-auto mr-[18px]">
          <ModArrow />
        </button>
      </div>
      <svg width="304" height="114" viewBox="0 0 304 114" className="ml-[30px]" fill="none" aria-hidden="true">
        <path d="M6 30.500h290M6 55.500h290M6 79.500h290" stroke="#434343" />
        <path d="M6 6.500h290M6 104.500h290" stroke="#5c5c5c" />
        <path d="M7 104C10 70 12 20 18 7c8 12 17 23 28 23" stroke="#66aef0" strokeWidth="2" />
        <path d="M46 29.500h154" stroke="#66aef0" strokeWidth="2" strokeDasharray="8 8" />
        <path d="M200 29.500c6 30 15 74 34 75" stroke="#66aef0" strokeWidth="2" />
        <circle cx="18" cy="6.500" r="6" fill="#66aef0" />
        <circle cx="46" cy="29.500" r="6" fill="#66aef0" />
        <circle cx="234" cy="104.500" r="6" fill="#66aef0" />
      </svg>
      <div className="mt-[25px] ml-[21px] grid w-[320px] grid-cols-4">
        {knobs.map(([t, a]) => (
          <KnobField key={t} text={t}>
            <Knob label={`Amp ${t}`} size={72} angle={a} color="#66aef0" face="white" />
          </KnobField>
        ))}
      </div>
    </div>
  );
}

function Bracket() {
  return <span className="mx-[6px] block h-2 shrink-0 border-x-4 border-t-4 border-[#4a7890]" />;
}

function OutputColumn() {
  return (
    <div className="row-span-3 flex flex-col gap-[6px]">
      <button type="button" className="relative flex h-[58px] flex-col items-stretch justify-start rounded-md bg-[#222] pt-[6px] text-[20px] leading-8 font-semibold text-white">
        <Bracket />
        <span className="absolute top-[14px] left-[14px] h-[38px] w-7 bg-[#4c4c4c]" />
        <span className="relative">Note FX</span>
      </button>
      <button type="button" className="flex h-[58px] flex-col items-stretch justify-start rounded-md bg-[#363636] pt-[6px] text-[20px] leading-8 font-semibold text-white">
        <Bracket />
        <span>FX</span>
      </button>
      <div className="flex flex-1 flex-col items-center rounded-md bg-[#4a4a4a] pt-[17px]">
        <div className="flex gap-2">
          <div className="flex flex-col items-center">
            <Knob label="Pan" size={56} angle={0} color="#ff2850" face="mid" ring="#727272" />
            <svg width="12" height="24" viewBox="0 0 12 24" fill="none" stroke="#d0d0d0" strokeWidth="2" aria-hidden="true" className="-mt-[2px]">
              <circle cx="6" cy="7" r="4" />
              <path d="M6 11v12" />
            </svg>
          </div>
          <div className="flex flex-col items-center">
            <Knob label="Output gain" size={56} angle={0} color="#ff2850" face="mid" ring="#727272" />
            <svg width="12" height="20" viewBox="0 0 12 20" fill="#c6c6c6" aria-hidden="true">
              <path d="M0 5h4l8-5v19l-8-5H0z" />
            </svg>
          </div>
        </div>
        <div className="mt-[10px]">
          <Knob label="Note spread" size={56} angle={0} from={-4} to={4} color="#ff2850" face="mid" ring="#727272" />
        </div>
        <svg width="24" height="14" viewBox="0 0 24 14" aria-hidden="true" className="-mt-[2px]">
          <path d="M0 0v14h24V0L12 7z" fill="#909090" />
          <path d="M0 .5l24 13M24 .5L0 13.500M0 13h24" stroke="#d8d8d8" strokeWidth="1.500" />
        </svg>
        <div className="mt-[19px]">
          <KnobField text="Out">
            <Knob label="Out" size={72} angle={83} color="#ff2850" face="mid" ring="#727272" />
          </KnobField>
        </div>
      </div>
    </div>
  );
}

const subShapes = [
  { name: "Sine", d: "M1 10c4 12 10 14 15 2S26-4 33 10", on: false },
  { name: "Half sine", d: "M1 12c5 11 10 11 15 0q1-2 3-2h14", on: false },
  { name: "Triangle", d: "M1 2l16 17L33 2", on: false },
  { name: "Square", d: "M0 20h16V2h17", on: false },
  { name: "Pulse", d: "M0 20h25V2h8", on: false },
  { name: "Saw", d: "M0 2l32 18V2", on: true },
];

function SubNoiseRow() {
  return (
    <div className="grid grid-cols-[282fr_138fr] gap-[6px]">
      <div className={`flex pt-[33px] pl-[33px] ${panel}`}>
        <KnobField text="Sub">
          <Knob label="Sub level" size={72} angle={-32} color="#c879ff" />
        </KnobField>
        <div className="-mt-2 ml-[15px] w-[122px] shrink-0">
          <div className="ml-[6px] grid w-[120px] grid-cols-3 gap-y-[10px]">
            {subShapes.map((s) => (
              <button key={s.name} type="button" aria-label={s.name}>
                <svg width="34" height="22" viewBox="0 0 34 22" fill="none" stroke={s.on ? "#c879ff" : "#7c5496"} strokeWidth="2.600" aria-hidden="true">
                  <path d={s.d} />
                </svg>
              </button>
            ))}
          </div>
          <div className="mt-4 grid grid-cols-3 text-center text-[22px] leading-[26px] text-[#dcdcdc]">
            <button type="button" className="h-9 border-b-4 border-transparent pb-[6px]">0</button>
            <button type="button" className="h-9 border-b-4 border-[#c879ff] pb-[6px] text-[#c879ff]">-1</button>
            <button type="button" className="h-9 border-b-4 border-transparent pb-[6px]">-2</button>
          </div>
        </div>
      </div>
      <div className={`flex justify-center pt-[33px] ${panel}`}>
        <KnobField text="Noise">
          <Knob label="Noise level" size={72} angle={-SWEEP} />
        </KnobField>
      </div>
    </div>
  );
}

function FilterEnvPanel() {
  const knobs = [
    ["A", -116],
    ["D", -4],
    ["S", -45],
    ["R", -58],
  ] as const;
  return (
    <div className={`flex pt-[33px] ${panel}`}>
      <div className="flex w-[85px] flex-col items-center pt-1">
        <ModLabel text="FEG" />
        <div className="mt-7 flex items-center gap-2 text-[#8e8e8e]">
          <svg width="7" height="10" viewBox="0 0 7 10" fill="currentColor" aria-hidden="true">
            <path d="M7 0v10L0 5z" />
          </svg>
          <Envelope className="" />
        </div>
      </div>
      <div className="grid w-[320px] grid-cols-4">
        {knobs.map(([t, a]) => (
          <KnobField key={t} text={t}>
            <Knob label={`Filter ${t}`} size={72} angle={a} color="#2fd6a3" />
          </KnobField>
        ))}
      </div>
    </div>
  );
}

function VoicePanel() {
  return (
    <div className={`relative flex pt-[33px] pl-[41px] ${panel}`}>
      <KnobField
        text={
          <svg width="22" height="16" viewBox="0 0 22 16" fill="none" stroke="#c6c6c6" strokeWidth="2" className="-ml-4" aria-hidden="true">
            <path d="M1 15C5 8 8 2 13 2h9" />
          </svg>
        }
      >
        <Knob label="High-pass" size={72} angle={-108} from={-108} to={SWEEP} color="#ff2850" />
      </KnobField>
      <div className="ml-8">
        <KnobField text="Pitch">
          <Knob label="Pitch" size={72} angle={0} from={-3} to={3} color="#ff2850" />
        </KnobField>
      </div>
      <span className="mt-[33px] h-[6px] w-8 bg-[#5e5e5e]" />
      <KnobField text="Glide">
        <Knob label="Glide" size={72} angle={-SWEEP} />
      </KnobField>
      <button type="button" aria-label="Legato" className="mt-[71px] ml-[1px] h-[22px] w-[22px] rounded-md bg-[#9a9a9a] text-[16px] leading-[22px] font-black text-[#363636]">
        L
      </button>
    </div>
  );
}

function PolymerDevice() {
  return (
    <section aria-label="Polymer" className="mt-6 flex h-[438px] flex-1 overflow-hidden rounded-2xl bg-[#5c5c5c]">
      <DeviceSpine name="POLYMER" modOn />
      <div className="grid flex-1 grid-flow-col grid-cols-[136fr_426fr_426fr_362fr_153fr] grid-rows-[137px_137px_138px] gap-x-[6px] gap-y-[7px] py-[6px] pr-[5px] pl-[6px]">
        <ModulatorColumn />
        <div className="row-span-2 grid">
          <OscillatorPanel />
        </div>
        <SubNoiseRow />
        <div className="row-span-2 grid">
          <FilterPanel />
        </div>
        <FilterEnvPanel />
        <div className="row-span-2 grid">
          <AdsrPanel />
        </div>
        <VoicePanel />
        <OutputColumn />
      </div>
    </section>
  );
}

const params = [
  { name: "Port", value: "8000", angle: -104 },
  { name: "MidiChan1", value: "1", angle: -SWEEP },
  { name: "MidiNum1", value: "48", angle: -32 },
  { name: "MsgType1", value: "0", angle: -SWEEP },
  { name: "Muted1", value: "Off", angle: -SWEEP },
  { name: "MidiChan2", value: "", angle: -SWEEP },
];

function Param({ name, value, angle, face, ring }: { name: string; value: string; angle: number; face?: Face; ring?: string }) {
  return (
    <>
      <div className="mt-[3px]">
        <Knob label={name} size={56} angle={angle} color="#ff8f1c" face={face} ring={ring} />
      </div>
      <div className="ml-[11px] text-[22px] leading-[26px] text-white">
        <div>{name}</div>
        {value && <div>{value}</div>}
      </div>
    </>
  );
}

function BirdhouseDevice() {
  return (
    <section aria-label="BirdHouse" className="mt-6 flex h-[438px] w-[406px] shrink-0 overflow-hidden rounded-2xl bg-[#5c5c5c]">
      <DeviceSpine name="BIRDHOUSE" windowOn />
      <div className="flex min-w-0 flex-1 flex-col p-[6px]">
        <div className="flex h-[42px] shrink-0">
          <button type="button" aria-label="Touch parameters" className="flex w-[42px] items-center justify-center rounded-md bg-[#4a4a4a]">
            <svg width="22" height="22" viewBox="0 0 22 22" aria-hidden="true">
              <circle cx="11" cy="11" r="9.500" fill="#8f6230" stroke="#ff8f1c" strokeWidth="3" />
              <path d="M11 11l-6 6" stroke="#ff8f1c" strokeWidth="3" />
            </svg>
          </button>
          <div className="ml-[6px] flex min-w-0 flex-1 items-center rounded-md bg-[#222] pr-[11px] pl-2 text-[#c6c6c6]">
            <svg width="29" height="20" viewBox="0 0 29 20" fill="none" aria-hidden="true">
              <circle cx="8" cy="8" r="6.500" stroke="currentColor" strokeWidth="2.500" />
              <path d="M12.500 12.500l6 6.500" stroke="currentColor" strokeWidth="3.500" />
              <path d="M18 10h11l-5.500 7z" fill="currentColor" />
            </svg>
            <input type="text" aria-label="Search parameters" className="min-w-0 flex-1 bg-transparent text-[22px] leading-[26px] outline-none" />
            <button type="button" aria-label="Clear search">
              <svg width="16" height="16" viewBox="0 0 16 16" stroke="currentColor" strokeWidth="2.600" aria-hidden="true">
                <path d="M1 1l14 14M15 1L1 15" />
              </svg>
            </button>
          </div>
          <button type="button" aria-label="Next page" className="flex w-12 items-center justify-center pl-[6px]">
            <svg width="15" height="10" viewBox="0 0 15 10" fill="#d4d4d4" aria-hidden="true">
              <path d="M0 4h9V0l6 5-6 5V6H0z" />
            </svg>
          </button>
        </div>
        <div className="mt-[6px] flex h-[61px] shrink-0 items-start overflow-hidden rounded-md bg-[#4a4a4a] pt-[6px] pl-[11px]">
          <Param name="MidiNum1" value="48" angle={-32} face="mid" ring="#727272" />
        </div>
        <div className="relative mt-[6px] min-h-0 flex-1 overflow-hidden rounded-b-md bg-[#363636]">
          {params.map((p) => (
            <div key={p.name} className="flex h-[60px] items-start border-t border-[#5c5c5c] pt-1 pl-[11px] first:border-transparent">
              <Param name={p.name} value={p.value} angle={p.angle} />
            </div>
          ))}
          <span className="absolute top-0 right-0 h-[49px] w-2 bg-[#5c5c5c]" />
          <span className="pointer-events-none absolute inset-x-0 bottom-0 h-9 bg-linear-to-b from-transparent to-[#222]/60" />
        </div>
      </div>
    </section>
  );
}

function Rack() {
  return (
    <section className="flex flex-1 items-stretch">
      <RackStrip
        name="PROJECT"
        width="w-[51px]"
        inset="pr-[3px]"
        icon={
          <svg width="24" height="19" viewBox="0 0 24 19" fill="#b4b4b4" aria-hidden="true">
            <path d="M0 4l6 4L12 0l6 8 6-4-3 10H3zM3 15.500h18V18H3z" />
          </svg>
        }
      />
      <div className="ml-1 flex">
        <RackStrip
          name="SYNTH"
          width="w-[54px]"
          active
          icon={
            <svg width="22" height="22" viewBox="0 0 22 22" aria-hidden="true">
              <path d="M0 0h22v22H0z" fill="#b4b4b4" />
              <path d="M4.500 0h5v13h-5zM12.500 0h5v13h-5z" fill="#3a3a3a" />
              <path d="M7 12v10M15 12v10" stroke="#3a3a3a" strokeWidth="1.500" />
            </svg>
          }
        />
      </div>
      <div className="flex w-12 shrink-0 justify-center pt-[234px] pl-[6px]">
        <button type="button" aria-label="Add device before" className="h-[18px]">
          <Plus />
        </button>
      </div>
      <PolymerDevice />
      <div className="flex w-[43px] shrink-0 justify-center pt-[234px]">
        <button type="button" aria-label="Add note effect before" className="h-[18px]">
          <Plus className="text-[#3c5c6e]" />
        </button>
      </div>
      <div className="relative flex">
        <span className="absolute top-2 -right-7 -left-7 h-4 border-x-[18px] border-t-[10px] border-[#4a788c]" />
        <BirdhouseDevice />
      </div>
      <div className="flex w-[42px] shrink-0 flex-col items-center pt-10">
        <span className="size-[18px] bg-[#1e1a10]" />
        <button type="button" aria-label="Add note effect after" className="mt-[176px] h-[18px]">
          <Plus className="text-[#3c5c6e]" />
        </button>
      </div>
      <div className="w-[188px] shrink-0 pt-[234px] pl-3">
        <button type="button" aria-label="Add device after" className="h-[18px]">
          <Plus />
        </button>
      </div>
    </section>
  );
}

export default function App() {
  return (
    <main className="flex min-h-screen flex-col overflow-hidden bg-[#101010] font-[Lato,sans-serif]">
      <div className="h-[9px] border-b-4 border-[#5c5c5c] bg-[#343434]" />
      <div className="relative flex">
        <SceneColumn />
        <TrackColumn />
        <button type="button" aria-label="Add track" className="mt-[39px] ml-[6px] h-[18px]">
          <Plus className="text-[#7c7c7c]" />
        </button>
        <PluginWindow />
      </div>
      <div className="mt-[2px] h-[14px] border-y-4 border-[#5c5c5c] bg-[#343434]" />
      <Rack />
    </main>
  );
}
